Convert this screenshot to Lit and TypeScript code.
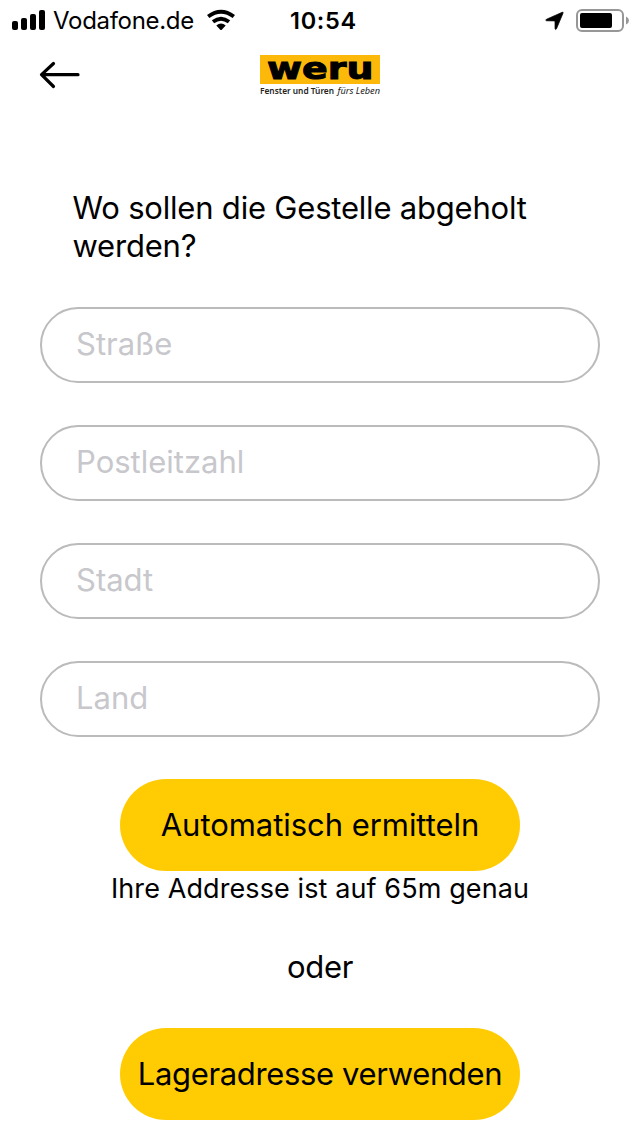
import { LitElement, html, css, svg } from "lit";
import { customElement } from "lit/decorators.js";

@customElement("status-bar")
class StatusBar extends LitElement {
  static styles = css`
    :host { display: grid; grid-template-columns: 1fr auto 1fr; grid-template-rows: 40px; height: 40px; align-items: center; padding: 0 12px 0 12px; }
    .left { display: flex; align-items: center; height: 40px; }
    .carrier { font-size: 24px; line-height: 38px; padding-top: 2px; letter-spacing: -0.3px; margin-left: 7px; white-space: nowrap; }
    .wifi { margin-left: 13px; }
    .time { font-size: 23.5px; font-weight: 600; line-height: 38px; padding-top: 2px; letter-spacing: 0.7px; width: 66px; white-space: nowrap; margin-left: 6px; }
    .right { display: flex; justify-content: flex-end; align-items: center; gap: 12px; margin-right: -1px; }
    svg { display: block; flex: none; }
  `;
  render() {
    return html`
      <div class="left">
        <svg width="34" height="40" viewBox="0 0 34 40">
          ${[[0, 21, 9], [9, 18, 12], [18, 14, 16], [27, 10, 20]].map(
            ([x, y, h]) => svg`<rect x=${x} y=${y} width="6" height=${h} rx="2"/>`
          )}
        </svg>
        <span class="carrier">Vodafone.de</span>
        <svg class="wifi" width="28" height="40" viewBox="0 0 28 40">
          <g fill="none" stroke="#000" stroke-width="3.8">
            <path d="M1.2 16.6Q14 6.8 26.8 16.6"/>
            <path d="M6 21.8Q14 15.6 22 21.8"/>
          </g>
          <path d="M9.3 25.4Q14 21.8 18.7 25.4L15 29.4Q14 30.4 13 29.4Z"/>
        </svg>
      </div>
      <div class="time">10:54</div>
      <div class="right">
        <svg width="19" height="40" viewBox="0 0 19 40">
          <path stroke="#000" stroke-width=".7" stroke-linejoin="round" d="M17.2 12.3Q18.6 11.8 18 13.2L11.5 28.8Q10.4 30.4 10 28.5V21.7Q10 20.9 9.2 20.9L1.6 20.8Q-.2 20.4 1.6 19.2Z"/>
        </svg>
        <svg width="53" height="40" viewBox="0 0 53 40">
          <rect x="1" y="10" width="46" height="21" rx="5" fill="none" stroke="#979797" stroke-width="2"/>
          <rect x="4" y="13" width="32" height="15" rx="2"/>
          <path d="M50 16.5Q53 17.8 53 20.5T50 24.5Z" fill="#979797"/>
        </svg>
      </div>`;
  }
}

@customElement("nav-header")
class NavHeader extends LitElement {
  static styles = css`
    :host { box-sizing: border-box; display: grid; grid-template-columns: 1fr 120px 1fr; padding: 14px 39px 0; height: 86px; }
    svg { display: block; overflow: visible; }
    .back { margin-top: 7px; }
    .brand { font-family: "DejaVu Sans", sans-serif; font-weight: 700; font-size: 30px; stroke: #000; stroke-width: 1px; }
    .claim { font-family: "Noto Sans", sans-serif; font-weight: 600; font-size: 9px; fill: #222; }
    .slogan { font-family: "Noto Sans", sans-serif; font-style: italic; font-size: 9px; fill: #222; }
  `;
  render() {
    return html`
      <svg class="back" width="42" height="28" viewBox="0 0 42 28">
        <path d="M14.5 2.5L2.5 13.7L14.5 25.5M3 13.7H39" fill="none" stroke="#000" stroke-width="3.2" stroke-linecap="round" stroke-linejoin="round"/>
      </svg>
      <svg width="120" height="44" viewBox="0 0 120 44">
        <rect y="1" width="120" height="29" fill="#fdb90a"/>
        <text class="brand" transform="translate(7 24.5)" textLength="106.5" lengthAdjust="spacingAndGlyphs">weru</text>
        <text class="claim" x="0" y="39.5" textLength="74" lengthAdjust="spacingAndGlyphs">Fenster und Türen</text>
        <text class="slogan" x="77.5" y="39.5" textLength="42.5" lengthAdjust="spacingAndGlyphs">fürs Leben</text>
      </svg>`;
  }
}

@customElement("app-root")
class AppRoot extends LitElement {
  static styles = css`
    :host { display: block; height: 1136px; overflow: hidden; background: #fff; color: #000; font-family: Inter, sans-serif; }
    .form { display: flex; flex-direction: column; padding: 63px 40px 0; }
    .title { margin: 0 0 42px 32.5px; font-size: 31px; font-weight: 400; line-height: 38px; letter-spacing: -0.2px; white-space: nowrap; }
    .fields { display: grid; gap: 42px; }
    .field { box-sizing: border-box; width: 100%; height: 76px; border: 2px solid #bbb; border-radius: 38px; padding: 0 34px 3px; font: 400 31px Inter, sans-serif; background: #fff; outline: none; }
    .field::placeholder { color: #c7c7cc; opacity: 1; }
    .actions { display: flex; flex-direction: column; align-items: center; padding-top: 42px; }
    .button { width: 400px; height: 92px; border: 0; border-radius: 46px; padding: 0 0 2px; background: #ffcc03; color: #000; font: 400 31px Inter, sans-serif; letter-spacing: -0.05px; white-space: nowrap; }
    .button.tight { letter-spacing: -0.36px; }
    .hint { font-size: 27px; line-height: 36px; letter-spacing: 0.1px; white-space: nowrap; }
    .or { font-size: 31px; line-height: 38px; letter-spacing: -0.3px; margin: 41px 0 42px; }
  `;
  render() {
    return html`
      <status-bar></status-bar>
      <nav-header></nav-header>
      <main class="form">
        <h1 class="title">Wo sollen die Gestelle abgeholt<br>werden?</h1>
        <div class="fields">
          ${["Straße", "Postleitzahl", "Stadt", "Land"].map(
            (label) => html`<input class="field" placeholder=${label} aria-label=${label}>`
          )}
        </div>
        <div class="actions">
          <button class="button">Automatisch ermitteln</button>
          <div class="hint">Ihre Addresse ist auf 65m genau</div>
          <div class="or">oder</div>
          <button class="button tight">Lageradresse verwenden</button>
        </div>
      </main>`;
  }
}
